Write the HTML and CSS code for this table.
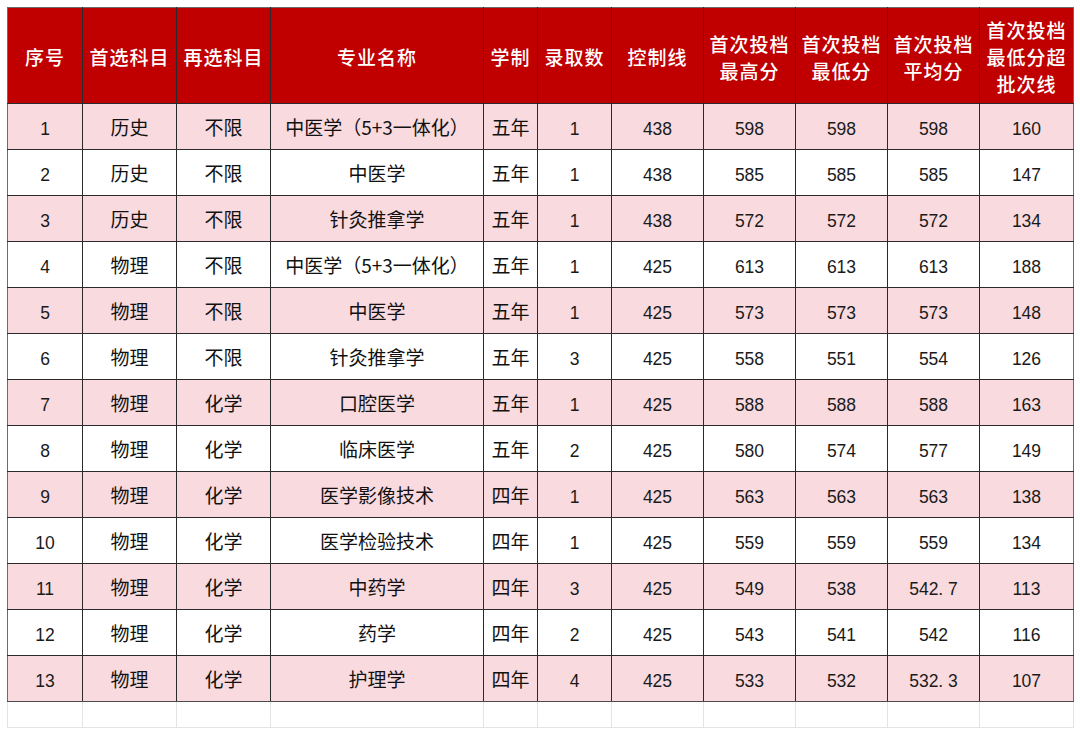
FILE: index.html
```html
<!DOCTYPE html>
<html lang="zh">
<head>
<meta charset="utf-8">
<title>录取分数</title>
<link rel="stylesheet" href="styles.css">
</head>
<body>
<table class="grid">
  <colgroup>
    <col class="c1"><col class="c2"><col class="c3"><col class="c4"><col class="c5"><col class="c6"><col class="c7"><col class="c8"><col class="c9"><col class="c10"><col class="c11">
  </colgroup>
  <thead>
    <tr class="head">
      <th>序号</th><th>首选科目</th><th>再选科目</th><th>专业名称</th><th>学制</th><th>录取数</th><th>控制线</th><th>首次投档最高分</th><th>首次投档最低分</th><th>首次投档平均分</th><th>首次投档最低分超批次线</th>
    </tr>
  </thead>
  <tbody>
    <tr class="pink"><td>1</td><td class="zh">历史</td><td class="zh">不限</td><td class="zh">中医学（5+3一体化）</td><td class="zh">五年</td><td>1</td><td>438</td><td>598</td><td>598</td><td>598</td><td>160</td></tr>
    <tr><td>2</td><td class="zh">历史</td><td class="zh">不限</td><td class="zh">中医学</td><td class="zh">五年</td><td>1</td><td>438</td><td>585</td><td>585</td><td>585</td><td>147</td></tr>
    <tr class="pink"><td>3</td><td class="zh">历史</td><td class="zh">不限</td><td class="zh">针灸推拿学</td><td class="zh">五年</td><td>1</td><td>438</td><td>572</td><td>572</td><td>572</td><td>134</td></tr>
    <tr><td>4</td><td class="zh">物理</td><td class="zh">不限</td><td class="zh">中医学（5+3一体化）</td><td class="zh">五年</td><td>1</td><td>425</td><td>613</td><td>613</td><td>613</td><td>188</td></tr>
    <tr class="pink"><td>5</td><td class="zh">物理</td><td class="zh">不限</td><td class="zh">中医学</td><td class="zh">五年</td><td>1</td><td>425</td><td>573</td><td>573</td><td>573</td><td>148</td></tr>
    <tr><td>6</td><td class="zh">物理</td><td class="zh">不限</td><td class="zh">针灸推拿学</td><td class="zh">五年</td><td>3</td><td>425</td><td>558</td><td>551</td><td>554</td><td>126</td></tr>
    <tr class="pink"><td>7</td><td class="zh">物理</td><td class="zh">化学</td><td class="zh">口腔医学</td><td class="zh">五年</td><td>1</td><td>425</td><td>588</td><td>588</td><td>588</td><td>163</td></tr>
    <tr><td>8</td><td class="zh">物理</td><td class="zh">化学</td><td class="zh">临床医学</td><td class="zh">五年</td><td>2</td><td>425</td><td>580</td><td>574</td><td>577</td><td>149</td></tr>
    <tr class="pink"><td>9</td><td class="zh">物理</td><td class="zh">化学</td><td class="zh">医学影像技术</td><td class="zh">四年</td><td>1</td><td>425</td><td>563</td><td>563</td><td>563</td><td>138</td></tr>
    <tr><td>10</td><td class="zh">物理</td><td class="zh">化学</td><td class="zh">医学检验技术</td><td class="zh">四年</td><td>1</td><td>425</td><td>559</td><td>559</td><td>559</td><td>134</td></tr>
    <tr class="pink"><td>11</td><td class="zh">物理</td><td class="zh">化学</td><td class="zh">中药学</td><td class="zh">四年</td><td>3</td><td>425</td><td>549</td><td>538</td><td>542. 7</td><td>113</td></tr>
    <tr><td>12</td><td class="zh">物理</td><td class="zh">化学</td><td class="zh">药学</td><td class="zh">四年</td><td>2</td><td>425</td><td>543</td><td>541</td><td>542</td><td>116</td></tr>
    <tr class="pink last"><td>13</td><td class="zh">物理</td><td class="zh">化学</td><td class="zh">护理学</td><td class="zh">四年</td><td>4</td><td>425</td><td>533</td><td>532</td><td>532. 3</td><td>107</td></tr>
    <tr class="blank"><td></td><td></td><td></td><td></td><td></td><td></td><td></td><td></td><td></td><td></td><td></td></tr>
  </tbody>
</table>
</body>
</html>
```

FILE: styles.css
```css
html, body {
  margin: 0;
  padding: 0;
  background: #ffffff;
}
body {
  padding: 7px 0 0 7px;
  font-family: "Liberation Sans", "Noto Sans CJK SC", sans-serif;
  color: #1a1a1a;
}
.grid {
  border-collapse: collapse;
  table-layout: fixed;
  width: 1066px;
}
.c1 { width: 75px; }
.c2 { width: 94px; }
.c3 { width: 94px; }
.c4 { width: 213px; }
.c5 { width: 54px; }
.c6 { width: 74px; }
.c7 { width: 92px; }
.c8 { width: 92px; }
.c9 { width: 92px; }
.c10 { width: 92px; }
.c11 { width: 94px; }

.grid th,
.grid td {
  padding: 0;
  text-align: center;
  vertical-align: middle;
  border: 1px solid #2a2a2a;
}
.head th {
  height: 93px;
  padding-top: 2px;
  background: #c00000;
  color: #ffffff;
  font-family: "Noto Sans CJK SC", sans-serif;
  font-weight: 500;
  font-size: 19px;
  letter-spacing: 1px;
  line-height: 27px;
  border-top-color: #6b6b6b;
}
.head th:first-child { border-left-color: #6b6b6b; }
.head th:last-child { border-right-color: #6b6b6b; }

.grid tbody td {
  height: 40px;
  padding-top: 5px;
  font-size: 17.5px;
  line-height: 20px;
  background: #ffffff;
}
.grid tbody td.zh {
  padding-top: 1px;
  height: 44px;
  font-family: "Noto Sans CJK SC", sans-serif;
  font-size: 19px;
  line-height: 24px;
  color: #111111;
}
.grid tbody tr td:first-child { border-left-color: #6b6b6b; }
.grid tbody tr td:last-child { border-right-color: #6b6b6b; }
.grid tbody tr.pink td { background: #f9dadf; }
.grid tbody tr.last td { border-bottom-color: #4a4a4a; }

.grid tbody tr.blank td {
  height: 25px;
  padding: 0;
  background: #ffffff;
  border-color: #e4e4e4;
}
.grid tbody tr.blank td:first-child { border-left-color: #e4e4e4; }
.grid tbody tr.blank td:last-child { border-right-color: #e4e4e4; }
```
